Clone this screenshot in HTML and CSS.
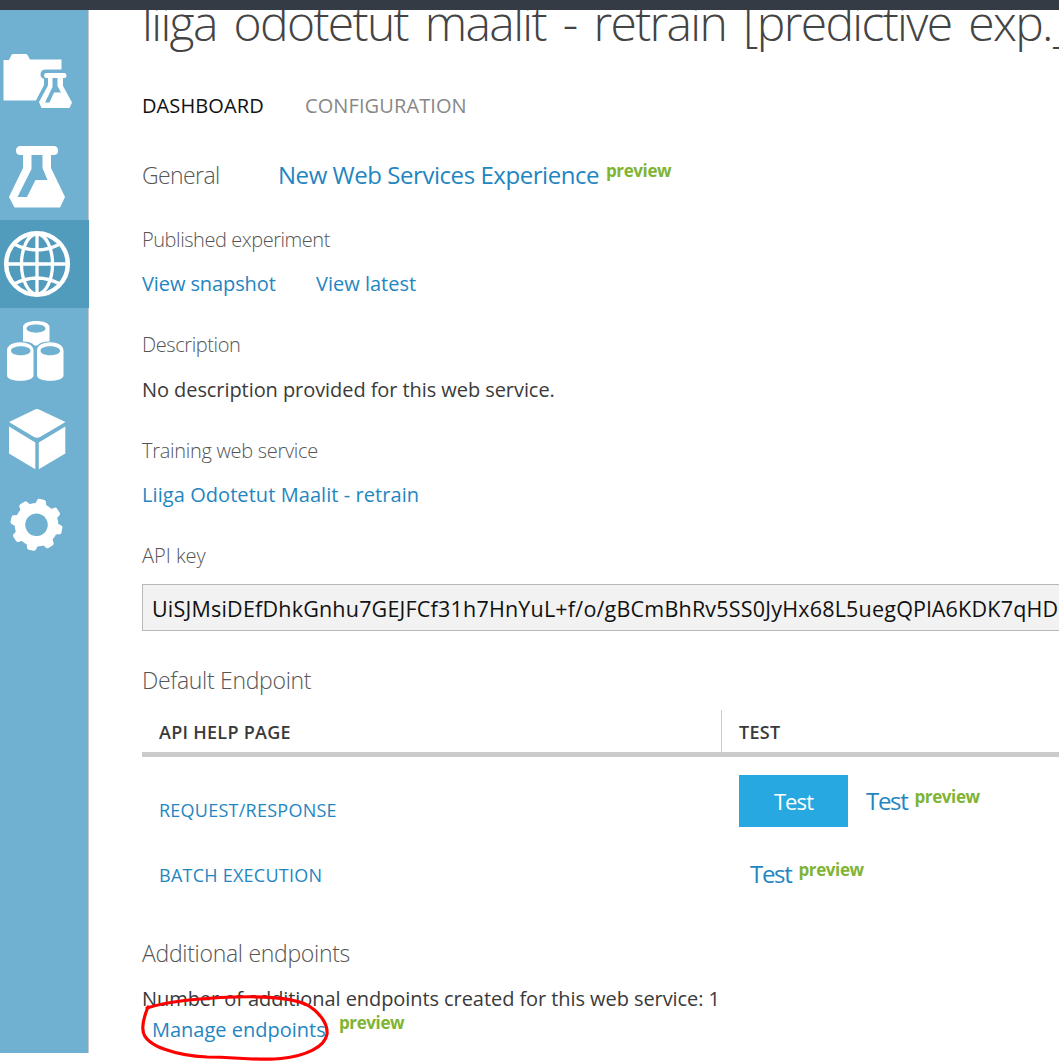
FILE: index.html
```html
<!DOCTYPE html>
<html lang="en">
<head>
<meta charset="utf-8">
<title>Web service dashboard</title>
<link rel="stylesheet" href="styles.css">
</head>
<body>
<div class="topbar"></div>
<div class="shell">
  <nav class="sidebar">
    <a class="nav-item nav-projects" href="#">
      <svg width="88" height="110" viewBox="0 10 88 110">
        <path fill="#fff" d="M3.500 60H9l2.500-5q.500-1 2-1h12q1.500 0 2 1l2.500 4.500h31.500v10H45q-4.500.500-4.500 5 0 3 3.500 4.500v6l-8 15.500H3.500z"/>
        <path fill="#fff" fill-rule="evenodd" d="M46 73h18.500q2 0 2 2.500t-2 2.500H63v8l9 16.500-2.500 5.500h-28L39 102l9-16.500V78h-2q-2-.3-2-2.500t2-2.500zM52.500 78v9L45 102.500h4.500l4.500-10h7L57.500 86v-8z"/>
      </svg>
    </a>
    <a class="nav-item" href="#">
      <svg width="88" height="100" viewBox="0 120 88 100">
        <path fill="#fff" fill-rule="evenodd" d="M20 146h34.500q3.500.5 3.500 4.500t-3.500 4.500H51v13l14 29-5 10.500H14.500L9 197l14-29v-13h-3.500q-3.500-.5-3.500-4.500t4-4.500zM31.500 155v14L17.500 197H27l8.500-17H47.500L42.500 168v-13z"/>
      </svg>
    </a>
    <a class="nav-item nav-active" href="#">
      <svg width="89" height="88" viewBox="0 220 89 88">
        <g fill="none" stroke="#fff" stroke-width="3.300">
          <circle cx="37" cy="264" r="30.800" stroke-width="4.500"/>
          <ellipse cx="37" cy="264" rx="15.500" ry="30"/>
          <path d="M37 234v60M7 264h60M14 244q23 12 46 0M14 284q23-12 46 0"/>
        </g>
      </svg>
    </a>
    <a class="nav-item" href="#">
      <svg width="88" height="88" viewBox="0 308 88 88">
        <path fill="#fff" fill-rule="evenodd" d="M23 327c0-8 26.500-8 26.500 0v14.500c-6 0-10 1.500-12 4h-3c-2-2.500-6-4-11.500-4zM26.500 328.500c0 5.500 19 5.500 19 0s-19-5.500-19 0zM7 350.500c0-11 26.500-11 26.500 0v25c0 7-26.500 7-26.500 0zM11 350.700c0 6 19.500 6 19.500 0s-19.500-6-19.500 0zM37 350.500c0-11 26.500-11 26.500 0v25c0 7-26.500 7-26.500 0zM40.500 350.700c0 6 19.500 6 19.500 0s-19.500-6-19.500 0z"/>
      </svg>
    </a>
    <a class="nav-item" href="#">
      <svg width="88" height="88" viewBox="0 396 88 88">
        <path fill="#fff" d="M34 410q3-2 6 0l25.500 12L40 437q-3 1.500-6 0L9 422zM9 426.500L35.300 442.500V469.200L9 453.500zM65.300 426.500L38.800 442.500V469.200L65.300 453.500z"/>
      </svg>
    </a>
    <a class="nav-item" href="#">
      <svg width="88" height="80" viewBox="0 484 88 80">
        <g transform="translate(36.500 524.800) rotate(12)">
          <circle r="16.500" fill="none" stroke="#fff" stroke-width="10.500"/>
          <g fill="#fff">
            <path id="tooth" d="M-6-19L-4.500-24.500Q-4-26-2.500-26H2.500Q4-26 4.500-24.500L6-19z"/>
            <use href="#tooth" transform="rotate(45)"/>
            <use href="#tooth" transform="rotate(90)"/>
            <use href="#tooth" transform="rotate(135)"/>
            <use href="#tooth" transform="rotate(180)"/>
            <use href="#tooth" transform="rotate(225)"/>
            <use href="#tooth" transform="rotate(270)"/>
            <use href="#tooth" transform="rotate(315)"/>
          </g>
        </g>
      </svg>
    </a>
  </nav>
  <main class="content">
    <h1 class="title"><span>liiga odotetut maalit - retrain [predictive exp.]</span></h1>
    <div class="row tabs"><a class="tab tab-current">DASHBOARD</a><a class="tab tab-other">CONFIGURATION</a></div>
    <div class="row general"><h2 class="section general-label">General</h2><a class="link-big experience">New Web Services Experience</a><sup class="preview">preview</sup></div>
    <div class="row label published">Published experiment</div>
    <div class="row links"><a class="link snapshot">View snapshot</a><a class="link latest">View latest</a></div>
    <div class="row label">Description</div>
    <div class="row body-text description">No description provided for this web service.</div>
    <div class="row label training-label">Training web service</div>
    <div class="row value"><a class="link training">Liiga Odotetut Maalit - retrain</a></div>
    <div class="row label api">API key</div>
    <div class="key">UiSJMsiDEfDhkGnhu7GEJFCf31h7HnYuL+f/o/gBCmBhRv5SS0JyHx68L5uegQPlA6KDK7qHD</div>
    <h2 class="row section endpoint">Default Endpoint</h2>
    <div class="grid head"><div class="cell">API HELP PAGE</div><div class="cell cell-test">TEST</div></div>
    <div class="grid request"><a class="cell help">REQUEST/RESPONSE</a><div class="cell tests"><button class="button">Test</button><a class="link-big test-link">Test</a><sup class="preview">preview</sup></div></div>
    <div class="grid batch"><a class="cell help batch-link">BATCH EXECUTION</a><div class="cell tests tests-batch"><a class="link-big test-link">Test</a><sup class="preview">preview</sup></div></div>
    <h2 class="row section additional">Additional endpoints</h2>
    <div class="row body-text number">Number of additional endpoints created for this web service: 1</div>
    <div class="row manage"><a class="link manage-link">Manage endpoints</a><sup class="preview">preview</sup>
      <svg class="marker" width="192" height="70" viewBox="138 991 192 70"><path d="M147 1008C171 1000 203 998 235 997C268 996 296 998 309 1006C320 1013 328 1024 327 1034C325 1047 306 1056 281 1058.500C260 1061 235 1057 207 1057C188 1056 178 1054 167 1050C153 1046 143 1038 143 1030C142 1024 146 1012 148 1007" fill="none" stroke="#f00" stroke-width="3.200" stroke-linecap="round"/></svg>
    </div>
  </main>
</div>
</body>
</html>
```
FILE: styles.css
```css
* { box-sizing: border-box; }
body { margin: 0; height: 1061px; overflow: hidden; background: #fff; font-family: "Open Sans", "Noto Sans", sans-serif; color: #3a3a3a; }
.topbar { height: 10px; background: #343b44; }
.shell { display: flex; height: 1051px; }
.sidebar { width: 89px; height: 1043px; flex: none; background: #70b1d2; border-right: 1px solid #c6c9cc; }
.nav-item { display: block; }
.nav-item svg { display: block; }
.nav-active { width: 89px; background: #519bbd; }
.content { flex: 1; min-width: 0; padding-left: 53px; overflow: hidden; }
.row { display: flex; height: 30px; line-height: 30px; white-space: nowrap; }
h1, h2 { margin: 0; font-weight: 300; }
.title { height: 81px; overflow: hidden; white-space: nowrap; font-size: 48px; line-height: 60px; letter-spacing: -1.65px; word-spacing: 6px; color: #444; }
.title span { display: block; margin-top: -17px; }
.tabs { font-size: 20px; letter-spacing: 0.1px; }
.tab-current { width: 163px; color: #111; }
.tab-other { color: #888; }
.general { margin-top: 39px; }
.section { font-size: 23px; letter-spacing: -0.3px; color: #555; }
.general-label { width: 136px; letter-spacing: -0.6px; }
.link, .link-big, .help { color: #1f86c1; }
.link { font-size: 20px; }
.link-big { font-size: 24px; letter-spacing: -0.45px; }
.test-link { letter-spacing: -1.3px; }
.preview { margin-left: 7px; font-size: 17px; font-weight: 700; line-height: 22px; letter-spacing: -0.4px; vertical-align: baseline; color: #7fb434; }
.label { margin-top: 31px; font-size: 20px; font-weight: 300; letter-spacing: -0.4px; color: #555; }
.training-label { letter-spacing: -0.3px; }
.published { margin-top: 35px; letter-spacing: -0.45px; }
.api { letter-spacing: 0; }
.links, .value { margin-top: 14px; }
.snapshot { width: 174px; letter-spacing: -0.1px; }
.training { letter-spacing: 0.07px; }
.body-text { font-size: 20px; letter-spacing: -0.07px; }
.description { margin-top: 15px; }
.key { height: 47px; margin-top: 13px; padding-left: 9px; border: 1px solid #b8b8b8; border-right: 0; background: #f2f2f2; color: #111; font-size: 21.500px; line-height: 48px; letter-spacing: 0.2px; white-space: nowrap; overflow: hidden; }
.endpoint { margin-top: 34px; }
.grid { display: grid; grid-template-columns: 579px 1fr; white-space: nowrap; }
.cell { padding-left: 17px; }
.head { height: 47px; margin-top: 15px; border-bottom: 5px solid #cbcbcb; font-size: 18px; font-weight: 600; line-height: 44px; letter-spacing: 0.27px; }
.cell-test { border-left: 1px solid #cbcbcb; }
.request { height: 70px; padding-top: 18px; }
.help { font-size: 18px; line-height: 71px; letter-spacing: 0.25px; }
.tests { display: flex; padding-left: 18px; line-height: 52px; }
.tests .preview { line-height: 44px; }
.button { width: 109px; height: 52px; margin-right: 18px; padding: 0; border: 0; background: #28a8e1; color: #fff; font: 500 22px/52px "Open Sans", "Noto Sans", sans-serif; letter-spacing: -0.9px; }
.batch { height: 100px; padding-top: 21px; }
.batch-link { line-height: 54px; }
.tests-batch { padding-left: 29px; }
.additional { margin-top: 11px; }
.number { margin-top: 16px; }
.manage { position: relative; padding-left: 10px; }
.manage-link { width: 174px; line-height: 32px; }
.manage .preview { margin-left: 13px; line-height: 18px; }
.marker { position: absolute; left: -4px; top: -23px; }
```
